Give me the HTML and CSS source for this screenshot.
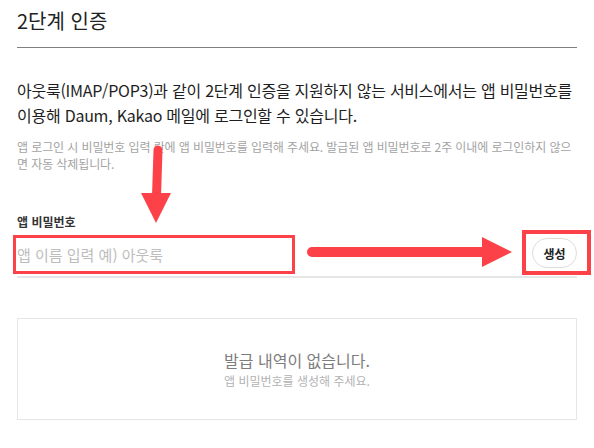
FILE: index.html
```html
<!DOCTYPE html>
<html lang="ko">
<head>
<meta charset="utf-8">
<title>2단계 인증</title>
<link rel="stylesheet" href="styles.css">
</head>
<body>
<div class="page">
  <h2 class="title">2단계 인증</h2>
  <p class="desc">아웃룩(IMAP/POP3)과 같이 2단계 인증을 지원하지 않는 서비스에서는 앱 비밀번호를 이용해 Daum, Kakao 메일에 로그인할 수 있습니다.</p>
  <p class="note">앱 로그인 시 비밀번호 입력 란에 앱 비밀번호를 입력해 주세요. 발급된 앱 비밀번호로 2주 이내에 로그인하지 않으면 자동 삭제됩니다.</p>
  <div class="field">
    <label class="label" for="app">앱 비밀번호</label>
    <div class="row">
      <input class="input" id="app" type="text" placeholder="앱 이름 입력 예) 아웃룩">
      <button class="btn" type="button">생성</button>
    </div>
  </div>
  <div class="empty">
    <strong class="empty-title">발급 내역이 없습니다.</strong>
    <span class="empty-sub">앱 비밀번호를 생성해 주세요.</span>
  </div>
</div>
<svg class="annot" width="594" height="448" viewBox="0 0 594 448" aria-hidden="true">
  <g fill="#fd4149" stroke="#fd4149">
    <line x1="158" y1="150" x2="156.5" y2="196" stroke-width="9" stroke-linecap="round"/>
    <polygon points="141,193 171,193 156,223" stroke="none"/>
    <line x1="312" y1="252" x2="485" y2="252" stroke-width="10" stroke-linecap="round"/>
    <polygon points="482,237 482,267 512,252" stroke="none"/>
  </g>
  <g fill="none" stroke="#fd4149">
    <rect x="14.5" y="236.5" width="279" height="36" stroke-width="3"/>
    <rect x="524" y="232" width="65" height="41" stroke-width="4"/>
  </g>
</svg>
</body>
</html>
```

FILE: styles.css
```css
html, body {
  margin: 0;
  padding: 0;
  background: #ffffff;
}
body {
  font-family: "Noto Sans CJK KR", "Noto Sans", sans-serif;
  color: #222;
  position: relative;
  width: 594px;
  height: 448px;
  overflow: hidden;
}
.page {
  width: 560px;
  padding-left: 17px;
}
.title {
  margin: 0;
  padding-top: 9px;
  padding-bottom: 14px;
  font-size: 20px;
  line-height: 24px;
  font-weight: 400;
  color: #222;
  border-bottom: 1px solid #7f7f7f;
}
.desc {
  margin: 30px 0 0;
  font-size: 16px;
  line-height: 25px;
  letter-spacing: -0.25px;
  color: #1e1e1e;
}
.note {
  margin: 10px 0 0;
  font-size: 12px;
  line-height: 17px;
  letter-spacing: -0.1px;
  color: #a3a3a3;
}
.field {
  margin-top: 41px;
  display: flex;
  flex-direction: column;
}
.label {
  font-size: 12px;
  line-height: 17px;
  font-weight: 700;
  color: #333;
}
.row {
  margin-top: 5px;
  height: 41px;
  display: flex;
  align-items: flex-start;
  border-bottom: 2px solid #e6e6e6;
}
.input {
  flex: 1;
  min-width: 0;
  height: 36px;
  margin-top: 1px;
  padding: 0;
  border: 0;
  outline: none;
  background: transparent;
  font-family: inherit;
  font-size: 15px;
  color: #222;
}
.input::placeholder {
  color: #bdbdbd;
}
.btn {
  margin-top: 3px;
  width: 45px;
  height: 30px;
  padding: 0;
  border: 1px solid #dcdcdc;
  border-radius: 15px;
  background: #fff;
  font-family: inherit;
  font-size: 12px;
  font-weight: 700;
  color: #222;
}
.empty {
  margin-top: 40px;
  height: 99px;
  border: 1px solid #e6e6e6;
  display: flex;
  flex-direction: column;
  align-items: center;
  justify-content: center;
  gap: 1px;
  padding-top: 1px;
  box-sizing: content-box;
}
.empty-title {
  font-size: 16px;
  line-height: 22px;
  font-weight: 400;
  color: #7d7d7d;
}
.empty-sub {
  font-size: 12px;
  line-height: 18px;
  color: #b3b3b3;
}
.annot {
  position: absolute;
  left: 0;
  top: 0;
  pointer-events: none;
}
```
